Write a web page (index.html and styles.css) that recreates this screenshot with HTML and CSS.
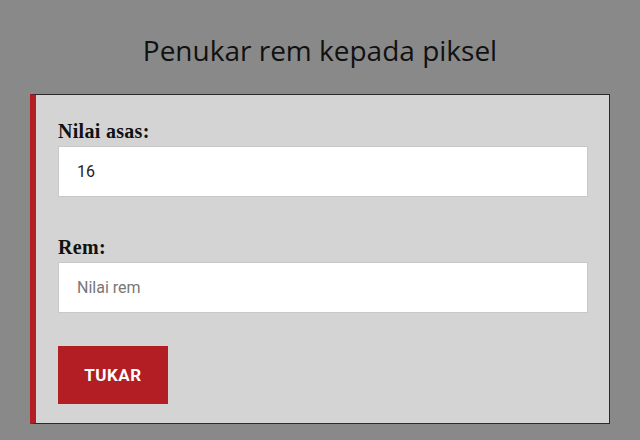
FILE: index.html
```html
<!DOCTYPE html>
<html lang="ms">
<head>
    <meta charset="UTF-8">
    <meta name="viewport" content="width=device-width, initial-scale=1.0">
    <title>Penukar rem kepada piksel</title>
    <link rel="stylesheet" href="styles.css">
</head>
<body>
    <h1>Penukar rem kepada piksel</h1>

    <div class="card">
        <div class="field">
            <label for="base">Nilai asas:</label>
            <input type="text" id="base" value="16">
        </div>

        <div class="field">
            <label for="rem">Rem:</label>
            <input type="text" id="rem" placeholder="Nilai rem">
        </div>

        <button>TUKAR</button>
    </div>
</body>
</html>
```

FILE: styles.css
```css
body { margin: 0; background: #898989; font-family: "Open Sans", sans-serif; }
h1 { margin: 0; padding: 31px 0 0; height: 63px; text-align: center; font-weight: 400; font-size: 28px; line-height: 38px; color: #111; }
.card { box-sizing: border-box; margin-left: 30px; width: 580px; background: #d4d4d4; border: 1px solid #2a2a2a; border-left: 6px solid #b31d24; padding: 25px 21px 19px 22px; }
.field { margin-bottom: 39px; }
.field + .field { margin-bottom: 33px; }
label { display: block; margin-bottom: 4px; font-family: "Liberation Serif", serif; font-weight: 700; font-size: 20px; line-height: 22px; letter-spacing: 0.3px; color: #111; }
input { display: block; width: 100%; height: 51px; box-sizing: border-box; padding: 0 18px; border: 1px solid #c8c8c8; background: #fff; font-family: Roboto, sans-serif; font-size: 16px; color: #222; }
input::placeholder { color: #777; }
button { width: 110px; height: 58px; background: #b31d24; color: #fff; border: none; font-family: Roboto, sans-serif; font-weight: 700; font-size: 17px; letter-spacing: 0.5px; cursor: pointer; }
```
